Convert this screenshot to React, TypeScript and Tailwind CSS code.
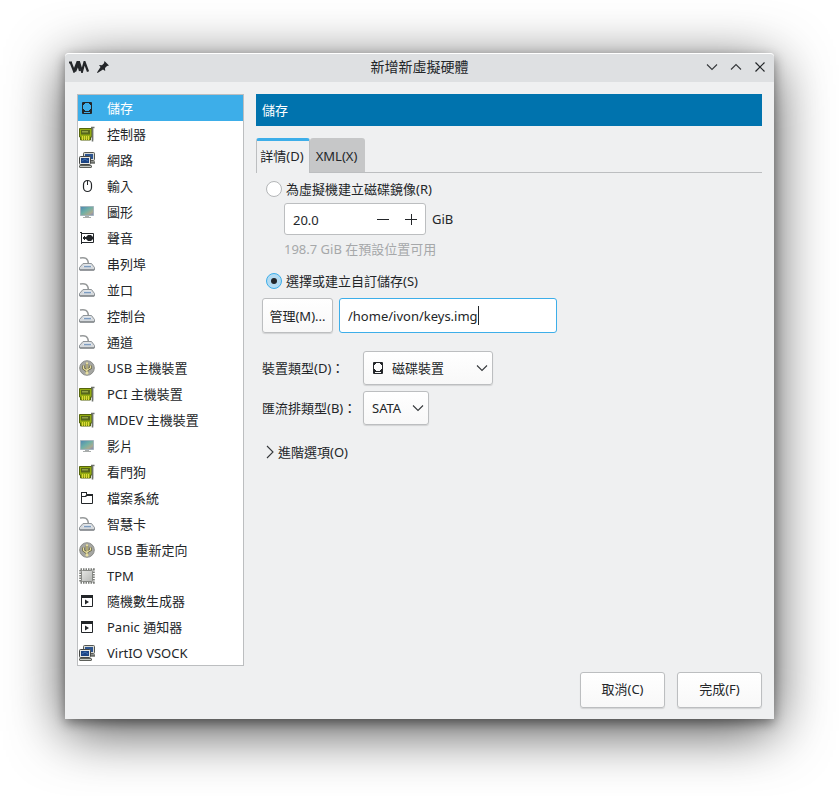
import { useState, type ReactNode } from "react";

function Glyph({ children, size = 16 }: { children: ReactNode; size?: number }) {
  return (
    <svg aria-hidden="true" width={size} height={size} viewBox="0 0 16 16" fill="none" className="block shrink-0">
      {children}
    </svg>
  );
}

function DiskIcon() {
  return (
    <Glyph>
      <path d="M3.500 2.500h9v11h-9z" stroke="#232629" />
      <path d="M4 3h2v1H5v1H4zM12 3h-2v1h1v1h1zM4 9h1v1h1v1h4v-1h1V9h1v4h-1v-1H5v1H4z" fill="#232629" />
    </Glyph>
  );
}

function CardIcon() {
  return (
    <Glyph>
      <path d="M0.500 2.500h12.500v8.500h-1.500v3h-10v-3h-1z" fill="#93ab10" stroke="#56650c" />
      <path d="M2 4h9v4.500H2z" fill="#55651c" />
      <path d="M3 5h6v1.500H3z" fill="#93a345" />
      <path d="M3.500 10v4M5.500 10v4M7.500 10v4M9.500 10v4" stroke="#dcd83a" />
      <path d="M12 1.500h3.500M13.500 1.500v14" stroke="#6f736d" strokeWidth="1.600" />
      <path d="M14.500 2.500V14" stroke="#c4c6c3" />
    </Glyph>
  );
}

function NetworkIcon() {
  return (
    <Glyph>
      <rect x="4.500" y="0.500" width="11" height="8" rx="1" fill="#d7d9d4" stroke="#555753" />
      <path d="M6 2h8v5H6z" fill="#2c5490" />
      <path d="M12 10.500h4" stroke="#6b6e69" strokeWidth="2.500" />
      <rect x="0.500" y="4.500" width="11" height="8" rx="1" fill="#e6e7e3" stroke="#454744" />
      <path d="M2 6h8v5H2z" fill="#1b4383" />
      <path d="M3 9l3-2 3 2" stroke="#4272b3" />
      <rect x="0.500" y="13.500" width="12" height="2" rx="0.500" fill="#c8cbc5" stroke="#5c5f5a" />
    </Glyph>
  );
}

function MouseIcon() {
  return (
    <Glyph>
      <rect x="4.500" y="2.500" width="8" height="11" rx="4" stroke="#232629" strokeWidth="1.200" />
      <path d="M8.500 3v4" stroke="#232629" />
    </Glyph>
  );
}

function DisplayIcon() {
  return (
    <Glyph>
      <defs>
        <linearGradient id="screen" x1="0" y1="0" x2="1" y2="1">
          <stop offset="0" stopColor="#4d86b4" />
          <stop offset="0.450" stopColor="#6fb0a6" />
          <stop offset="0.750" stopColor="#a8ab90" />
          <stop offset="1" stopColor="#8380bd" />
        </linearGradient>
      </defs>
      <path d="M1.500 2.500h13v9h-13z" fill="url(#screen)" stroke="#a3b5bd" />
      <path d="M6 12h4v1h2v1H4v-1h2z" fill="#a9adac" />
    </Glyph>
  );
}

function SoundIcon() {
  return (
    <Glyph>
      <path d="M1 2.500h2M2.500 2v12M3 3.500h11.500v9H3" stroke="#232629" />
      <path d="M9 5h3l2 2v2l-2 2H9L7 9V7zM5 6h1v1h1v2H6v1H5V9H4V7h1z" fill="#232629" />
    </Glyph>
  );
}

function SerialIcon() {
  return (
    <Glyph>
      <path d="M1 2c5-1 8 0 8.500 6" stroke="#96999a" strokeWidth="1.500" />
      <path d="M4 7.500h8.500l3 4v2.500H0.500v-2.500z" fill="#d5d9dd" stroke="#8f9498" />
      <path d="M5.500 8.500h6L13 11H4z" fill="#f0f1f2" />
      <path d="M5 10.500h7" stroke="#7d9cc0" strokeWidth="1.500" />
      <path d="M1 14h14" stroke="#777c80" strokeWidth="1.200" />
    </Glyph>
  );
}

function UsbIcon() {
  return (
    <Glyph>
      <circle cx="8" cy="8" r="7.300" fill="#a5a6a2" stroke="#8b8d89" />
      <path d="M8 13V3M8 11L4.500 8.500V5.500M8 10l3.500-2V5.500" stroke="#5d5a35" strokeWidth="2.400" />
      <path d="M8 13V3M8 11L4.500 8.500V5.500M8 10l3.500-2V5.500" stroke="#e7dea0" strokeWidth="1.200" />
      <path d="M6.500 4L8 1.500 9.500 4z" fill="#e7dea0" />
      <circle cx="8" cy="13" r="1.600" fill="#e7dea0" />
    </Glyph>
  );
}

function FolderIcon() {
  return (
    <Glyph>
      <path d="M2.500 13.500v-11h5v2h6v9z" stroke="#232629" />
      <path d="M2 2h6v2h6v2H8L7 7H2V6h4l2-2H7V3H2z" fill="#232629" />
    </Glyph>
  );
}

function ChipIcon() {
  return (
    <Glyph>
      <defs>
        <linearGradient id="chip" x1="0" y1="0" x2="1" y2="1">
          <stop offset="0" stopColor="#e6e7e5" />
          <stop offset="1" stopColor="#b4b6b3" />
        </linearGradient>
      </defs>
      <rect x="1.500" y="1.500" width="13" height="13" stroke="#7b7d79" strokeWidth="2.500" strokeDasharray="1.500 1" />
      <rect x="2.500" y="2.500" width="11" height="11" rx="1" fill="url(#chip)" stroke="#858783" />
    </Glyph>
  );
}

function RunIcon() {
  return (
    <Glyph>
      <path d="M2.500 3.500h11v10h-11z" stroke="#232629" />
      <path d="M2 2h12v3H2zM6 6.500l4 2.500-4 2.500z" fill="#232629" />
    </Glyph>
  );
}

function Chevron({ direction }: { direction: "down" | "up" | "right" }) {
  const paths = { down: "M3 5.500l5 5 5-5", up: "M3 10.500l5-5 5 5", right: "M5 2l6 6-6 6" };
  return (
    <Glyph>
      <path d={paths[direction]} stroke="#35383b" strokeWidth="1.100" />
    </Glyph>
  );
}

const devices: { label: string; icon: () => ReactNode; latin?: boolean }[] = [
  { label: "儲存", icon: DiskIcon },
  { label: "控制器", icon: CardIcon },
  { label: "網路", icon: NetworkIcon },
  { label: "輸入", icon: MouseIcon },
  { label: "圖形", icon: DisplayIcon },
  { label: "聲音", icon: SoundIcon },
  { label: "串列埠", icon: SerialIcon },
  { label: "並口", icon: SerialIcon },
  { label: "控制台", icon: SerialIcon },
  { label: "通道", icon: SerialIcon },
  { label: "USB 主機裝置", icon: UsbIcon },
  { label: "PCI 主機裝置", icon: CardIcon },
  { label: "MDEV 主機裝置", icon: CardIcon },
  { label: "影片", icon: DisplayIcon },
  { label: "看門狗", icon: CardIcon },
  { label: "檔案系統", icon: FolderIcon },
  { label: "智慧卡", icon: SerialIcon },
  { label: "USB 重新定向", icon: UsbIcon },
  { label: "TPM", icon: ChipIcon, latin: true },
  { label: "隨機數生成器", icon: RunIcon },
  { label: "Panic 通知器", icon: RunIcon },
  { label: "VirtIO VSOCK", icon: NetworkIcon, latin: true },
];

const raised = "rounded-[3px] border border-[#bcbec0] bg-linear-to-b from-white to-[#f8f8f8] shadow-[0_1px_1px_#0000001f]";
const radio =
  "grid size-4 shrink-0 appearance-none place-content-center rounded-full border border-[#b4b6b8] bg-white checked:border-[#3daee9] checked:bg-[#b3dbf2] checked:before:size-[6px] checked:before:rounded-full checked:before:bg-[#232629]";

function TitleBar() {
  return (
    <header className="grid h-[29px] grid-cols-[1fr_auto_1fr] items-center rounded-t-[4px] border-t border-white bg-[#dee0e2] px-1 pb-[2px]">
      <div className="flex items-center gap-[6px]">
        <svg aria-hidden="true" width="20" height="12" viewBox="0 0 20 12" fill="none" className="block">
          <path d="M0 1.500h3M1.500 1l3.500 9 3.500-9 2.500 9" stroke="#232629" strokeWidth="2.200" />
          <path d="M6 10.500L10 1l3 9.500L15.500 1 19 10.500" stroke="#232629" strokeWidth="2.200" />
        </svg>
        <button type="button" aria-label="釘選">
          <Glyph>
            <path d="M9.500 2L14 6.500l-2 .5-2 2 .2 3L8 10.500 2.500 14 2 13.500 5.500 8 4 6l3 .2 2-2z" fill="#232629" />
          </Glyph>
        </button>
      </div>
      <h1 className="text-sm leading-5">新增新虛擬硬體</h1>
      <div className="flex justify-end gap-2 pr-[2px]">
        <button type="button" aria-label="最小化"><Chevron direction="down" /></button>
        <button type="button" aria-label="最大化"><Chevron direction="up" /></button>
        <button type="button" aria-label="關閉">
          <Glyph><path d="M3.500 3.500l9 9M12.500 3.500l-9 9" stroke="#232629" strokeWidth="1.200" /></Glyph>
        </button>
      </div>
    </header>
  );
}

function DeviceList({ selected, onSelect }: { selected: number; onSelect: (index: number) => void }) {
  return (
    <nav className="w-[167px] shrink-0 border border-[#bcbec0] bg-white">
      <ul>
        {devices.map(({ label, icon: Icon, latin }, index) => (
          <li key={label}>
            <button
              type="button"
              aria-current={index === selected}
              onClick={() => onSelect(index)}
              className={`flex w-full items-center gap-3 pl-px text-left ${latin ? "h-[25px]" : "h-[26px]"} ${
                index === selected ? "bg-[#3daee9] text-white" : ""
              }`}
            >
              <Icon />
              <span>{label}</span>
            </button>
          </li>
        ))}
      </ul>
    </nav>
  );
}

function StorageForm() {
  const [mode, setMode] = useState("custom");
  const [size, setSize] = useState("20.0");
  const [path, setPath] = useState("/home/ivon/keys.img");
  const step = (delta: number) => setSize((Number(size) + delta).toFixed(1));

  return (
    <form className="pl-[6px]">
      <label className="mt-[6px] flex h-5 items-center gap-1 pl-1">
        <input type="radio" name="mode" className={radio} checked={mode === "create"} onChange={() => setMode("create")} />
        為虛擬機建立磁碟鏡像(R)
      </label>
      <div className="mt-1 flex items-center gap-[6px] pl-[22px]">
        <div className="flex h-8 w-[142px] items-center rounded-[3px] border border-[#bcbec0] bg-white pl-2">
          <input
            aria-label="大小"
            className="min-w-0 flex-1 bg-transparent pt-[2px] outline-none"
            value={size}
            onChange={(event) => setSize(event.target.value)}
          />
          <button type="button" aria-label="減少" className="grid w-7 place-items-center" onClick={() => step(-1)}>
            <Glyph><path d="M2 8.500h12" stroke="#232629" /></Glyph>
          </button>
          <button type="button" aria-label="增加" className="grid w-7 place-items-center" onClick={() => step(1)}>
            <Glyph><path d="M2 8.500h12M8.500 3v11" stroke="#232629" /></Glyph>
          </button>
        </div>
        <span>GiB</span>
      </div>
      <p className="mt-1 pl-[22px] leading-5 text-[#a6a8aa]">198.7 GiB 在預設位置可用</p>
      <label className="mt-3 flex h-5 items-center gap-1 pl-1">
        <input type="radio" name="mode" className={radio} checked={mode === "custom"} onChange={() => setMode("custom")} />
        選擇或建立自訂儲存(S)
      </label>
      <div className="mt-[7px] flex gap-[6px]">
        <button type="button" className={`h-[35px] w-[71px] ${raised}`}>管理(M)...</button>
        <div className="flex h-[35px] w-[218px] items-center rounded-[3px] border border-[#3daee9] bg-white pl-2">
          <input
            aria-label="儲存路徑"
            className="field-sizing-content max-w-full bg-transparent outline-none"
            value={path}
            onChange={(event) => setPath(event.target.value)}
          />
          <span aria-hidden="true" className="h-[19px] w-px bg-[#232629]" />
        </div>
      </div>
      <div className="mt-[18px] grid grid-cols-[95px_auto] items-center justify-start gap-x-[6px] gap-y-[6px]">
        <label htmlFor="device-type" className="whitespace-nowrap">裝置類型(D)：</label>
        <div className="relative w-[130px]">
          <span className="pointer-events-none absolute top-[9px] left-[7px]"><DiskIcon /></span>
          <select id="device-type" className={`block h-[34px] w-full appearance-none pl-7 outline-none ${raised}`}>
            <option>磁碟裝置</option>
          </select>
          <span className="pointer-events-none absolute top-[9px] right-[3px]"><Chevron direction="down" /></span>
        </div>
        <label htmlFor="bus-type" className="whitespace-nowrap">匯流排類型(B)：</label>
        <div className="relative w-[66px]">
          <select id="bus-type" className={`block h-[34px] w-full appearance-none pl-2 outline-none ${raised}`}>
            <option>SATA</option>
          </select>
          <span className="pointer-events-none absolute top-[9px] right-[3px]"><Chevron direction="down" /></span>
        </div>
      </div>
      <button type="button" aria-expanded="false" className="mt-[17px] flex h-5 items-center">
        <Chevron direction="right" />
        進階選項(O)
      </button>
    </form>
  );
}

export default function App() {
  const [selected, setSelected] = useState(0);
  return (
    <div className="flex min-h-screen flex-col bg-white px-[65px] pt-[53px] pb-[77px] font-['Noto_Sans','Noto_Sans_CJK_TC',sans-serif] text-[13px] leading-5 text-[#232629]">
      <main className="flex flex-1 flex-col rounded-t-[4px] bg-[#eff0f1] shadow-[0_12px_56px_#000000b3,0_4px_12px_#00000066]">
        <TitleBar />
        <div className="flex flex-1 flex-col gap-[6px] p-3 pb-[11px]">
          <div className="flex flex-1 items-start gap-3">
            <DeviceList selected={selected} onSelect={setSelected} />
            <section className="min-w-0 flex-1">
              <h2 className="flex h-8 items-center bg-[#0073ae] px-[6px] text-white">儲存</h2>
              <div role="tablist" className="mt-3 flex h-[35px] border-b border-[#bcbec0]">
                <button
                  type="button"
                  role="tab"
                  aria-selected="true"
                  className="-mb-px w-[54px] rounded-t-[3px] border-x border-t-[3px] border-x-[#bcbec0] border-t-[#3daee9] bg-[#eff0f1] pr-[2px] pb-[2px]"
                >
                  詳情(D)
                </button>
                <button type="button" role="tab" aria-selected="false" className="w-[55px] rounded-t-[3px] bg-[#c6c7c8] pt-[2px] pr-[2px]">
                  XML(X)
                </button>
              </div>
              <StorageForm />
            </section>
          </div>
          <footer className="flex justify-end gap-3">
            <button type="button" className={`h-9 w-[85px] pb-[2px] ${raised}`}>取消(C)</button>
            <button type="button" className={`h-9 w-[85px] pb-[2px] ${raised}`}>完成(F)</button>
          </footer>
        </div>
      </main>
    </div>
  );
}
